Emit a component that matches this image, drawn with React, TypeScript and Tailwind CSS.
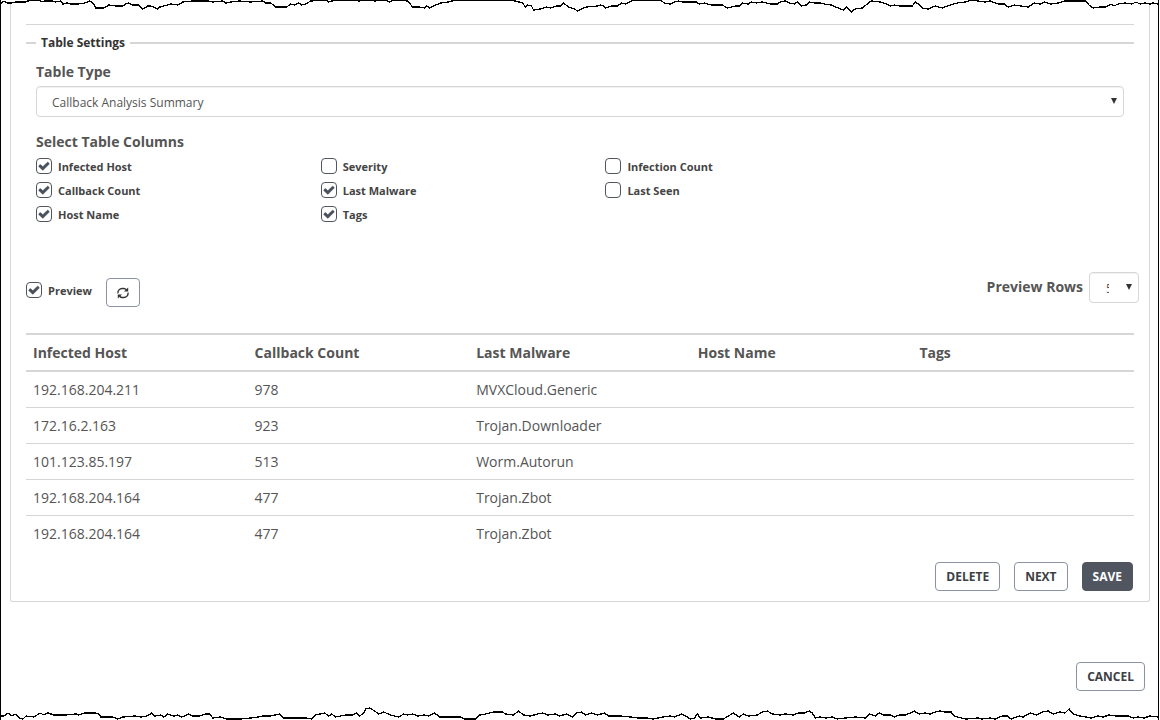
import { useState } from "react";

const COLUMNS = [
  { name: "Infected Host", checked: true },
  { name: "Severity", checked: false },
  { name: "Infection Count", checked: false },
  { name: "Callback Count", checked: true },
  { name: "Last Malware", checked: true },
  { name: "Last Seen", checked: false },
  { name: "Host Name", checked: true },
  { name: "Tags", checked: true },
];

const HEADERS = ["Infected Host", "Callback Count", "Last Malware", "Host Name", "Tags"];

const ROWS = [
  ["192.168.204.211", "978", "MVXCloud.Generic", "", ""],
  ["172.16.2.163", "923", "Trojan.Downloader", "", ""],
  ["101.123.85.197", "513", "Worm.Autorun", "", ""],
  ["192.168.204.164", "477", "Trojan.Zbot", "", ""],
  ["192.168.204.164", "477", "Trojan.Zbot", "", ""],
];

const TOP_EDGE =
  "0,4 2,1 4,2 7,3 10,3 15,2 25,2 27,1 34,0 40,1 42,2 44,1 52,1 54,2 60,1 62,4 66,3 70,4 77,4 84,3 89,1 92,3 95,8 103,8 108,5 115,6 122,6 125,4 128,3 132,5 138,5 142,9 147,6 150,6 155,8 157,9 159,7 163,6 170,4 177,5 182,2 192,1 207,1 212,2 222,1 225,3 230,2 238,1 250,2 262,1 265,3 270,3 275,7 282,7 286,7 290,4 294,5 298,3 301,5 305,4 310,1 325,0 328,2 331,1 337,0 355,0 358,1 365,0 375,1 380,0 387,1 389,2 393,0 407,1 412,7 419,7 424,8 426,6 429,8 435,5 440,3 448,2 455,0 505,0 515,1 522,3 525,7 527,5 531,6 533,10 540,9 546,7 550,8 556,6 560,6 563,3 568,7 574,9 577,11 581,9 586,7 597,6 600,5 603,6 605,8 611,6 617,6 621,3 625,4 629,2 634,0 660,0 664,3 670,4 674,2 678,1 682,2 696,2 699,4 704,3 711,5 722,5 727,8 735,6 739,6 742,3 748,4 751,2 756,3 762,2 770,4 777,4 780,2 785,1 789,3 794,4 797,2 801,6 806,5 809,2 814,3 820,3 824,4 831,5 838,8 843,10 846,7 851,12 855,9 862,8 867,4 871,1 880,2 886,4 890,6 894,5 900,6 912,6 915,2 918,4 922,8 928,9 935,6 942,8 950,5 957,3 965,2 972,0 978,1 985,2 990,1 998,4 1004,4 1008,7 1014,5 1021,6 1028,7 1034,3 1040,4 1044,2 1051,4 1058,3 1065,1 1072,1 1086,1 1089,5 1093,8 1100,7 1106,7 1111,4 1114,6 1118,4 1125,3 1132,4 1136,2 1140,4 1145,3 1150,4 1153,3 1158,4";

const BOTTOM_EDGE =
  "0,16 3,16 7,13 11,16 15,14 18,18 22,19 25,16 33,17 39,13 43,15 47,13 53,15 65,15 75,14 78,15 84,13 94,13 98,14 100,17 112,17 117,19 122,17 134,16 140,17 146,16 151,13 154,16 160,15 163,17 167,14 173,16 177,15 181,17 188,14 192,16 199,16 205,14 209,14 212,18 220,17 226,19 233,19 240,19 250,18 257,17 262,16 270,16 279,14 283,18 305,18 311,19 315,15 324,13 328,16 331,14 335,17 345,15 352,15 356,13 359,16 363,13 365,9 369,8 374,11 378,14 383,12 390,15 398,17 403,14 407,15 412,14 417,16 424,15 428,16 434,13 439,17 446,17 460,17 464,19 475,19 479,15 485,14 493,12 502,12 505,14 513,15 518,11 523,15 530,16 537,14 542,13 547,15 555,14 559,16 566,14 572,17 576,13 581,12 585,15 591,13 597,15 604,13 608,16 620,16 630,17 638,18 646,18 653,19 662,17 670,16 674,17 681,14 685,16 690,19 694,18 697,14 700,18 708,17 715,19 723,19 728,16 733,13 739,17 743,14 748,16 757,15 762,12 767,11 772,14 780,15 785,14 793,15 798,13 804,13 809,11 812,13 815,18 820,17 826,18 832,17 837,19 845,18 855,17 865,18 869,14 875,16 879,13 883,15 890,15 894,17 899,15 905,15 910,13 914,11 919,14 925,13 930,14 935,12 940,11 945,12 951,12 954,16 961,18 966,19 978,18 982,19 990,18 995,19 1002,16 1007,16 1011,19 1019,16 1023,17 1030,13 1036,15 1042,12 1048,11 1053,14 1060,12 1065,13 1069,9 1073,14 1080,16 1086,17 1091,18 1098,16 1103,17 1109,15 1116,16 1128,16 1133,18 1138,17 1144,18 1150,16 1158,17";

// Ragged line along the page edge; everything outside it is painted white.
function TornEdge({ side }: { side: "top" | "bottom" }) {
  const top = side === "top";
  const line = top ? TOP_EDGE : BOTTOM_EDGE;
  const outside = top ? "1162,4 1162,-3 -3,-3 -3,4" : "1162,17 1162,24 -3,24 -3,16";
  return (
    <svg
      aria-hidden="true"
      viewBox="0 0 1158 20"
      preserveAspectRatio="none"
      shapeRendering="crispEdges"
      className={`pointer-events-none absolute inset-x-0 h-5 w-full ${top ? "top-0" : "bottom-0"}`}
    >
      <polygon points={`${line} ${outside}`} fill="#fff" />
      <polyline points={line} fill="none" stroke="#000" strokeWidth="1.3" vectorEffect="non-scaling-stroke" />
    </svg>
  );
}

function Checkbox({ label, defaultChecked }: { label: string; defaultChecked: boolean }) {
  return (
    <label className="flex h-6 items-center text-[11px] font-bold text-[#444]">
      <span className="relative mr-1.5 flex size-4">
        <input
          type="checkbox"
          defaultChecked={defaultChecked}
          className="peer size-4 appearance-none rounded-[4px] border border-[#50555f] bg-white"
        />
        <svg
          viewBox="0 0 1792 1792"
          aria-hidden="true"
          className="pointer-events-none absolute top-0.5 left-0.5 hidden size-3 fill-[#4a505b] stroke-[#4a505b] peer-checked:block"
          strokeWidth="90"
        >
          <path d="M1671 566q0 40-28 68l-724 724-136 136q-28 28-68 28t-68-28l-136-136-362-362q-28-28-28-68t28-68l136-136q28-28 68-28t68 28l294 295 656-657q28-28 68-28t68 28l136 136q28 28 28 68z" />
        </svg>
      </span>
      <span className="pt-0.5">{label}</span>
    </label>
  );
}

function Arrow() {
  return (
    <svg
      viewBox="0 0 6 6"
      aria-hidden="true"
      className="pointer-events-none absolute top-3 right-[7px] size-1.5 fill-[#333]"
    >
      <path d="M0 0h6L3 6z" />
    </svg>
  );
}

const selectClass =
  "block h-[31px] appearance-none rounded-[4px] border border-[#d6d6d6] bg-white pt-0.5 text-xs inset-shadow-2xs";

const buttonClass =
  "h-[29px] rounded-[4px] border border-[#8b93a3] bg-white px-2.5 text-xs font-bold text-[#3c3f45]";

export default function App() {
  const [tableType, setTableType] = useState("Callback Analysis Summary");

  return (
    <div className="relative mr-px min-h-screen border-x border-black bg-white font-['Open_Sans',sans-serif] text-sm text-[#555]">
      <main className="mr-2 ml-[9px] rounded-b-[3px] border border-t-0 border-[#d6d6d6] pt-6 pb-2.5">
        <hr className="mx-[15px] border-[#d6d6d6]" />
        <fieldset className="mx-[15px] mt-2.5 border-t-2 border-[#d6d6d6] px-2.5">
          <legend className="px-[5px] text-xs leading-4 font-bold text-[#333]">Table Settings</legend>
          <label htmlFor="table-type" className="mt-[11px] block leading-5 font-bold">
            Table Type
          </label>
          <div className="relative mt-1">
            <select
              id="table-type"
              value={tableType}
              onChange={(e) => setTableType(e.target.value)}
              className={`${selectClass} w-full px-[15px]`}
            >
              <option>Callback Analysis Summary</option>
            </select>
            <Arrow />
          </div>
          <h2 className="mt-[15px] leading-5 font-bold">Select Table Columns</h2>
          <div className="mt-0.5 grid w-[78.5%] grid-cols-3">
            {COLUMNS.map((c) => (
              <Checkbox key={c.name} label={c.name} defaultChecked={c.checked} />
            ))}
          </div>
        </fieldset>

        <div className="mt-[46px] flex items-start justify-between pr-2.5 pl-[15px]">
          <div className="flex items-start gap-3.5 pt-1.5">
            <Checkbox label="Preview" defaultChecked />
            <button
              type="button"
              aria-label="Refresh preview"
              className="flex h-[29px] w-[34px] items-center justify-center rounded-[4px] border border-[#8b93a3] bg-white"
            >
              <svg viewBox="0 0 12 12" className="size-3 fill-none stroke-[#333]" strokeWidth="1.4">
                <path d="M.9 6.4C.7 3.6 2.6 1.5 5.2 1.5h1.6c1 0 1.8.5 2.6 1.3M11.1 5.6c.2 2.8-1.7 4.9-4.3 4.9H5.2c-1 0-1.8-.5-2.6-1.3" />
                <path d="M11.2.4v4.2H7zM.8 11.6V7.4H5z" className="fill-[#333] stroke-none" />
              </svg>
            </button>
          </div>
          <div className="flex items-start gap-1.5">
            <label htmlFor="preview-rows" className="leading-[29px] font-bold">
              Preview Rows
            </label>
            <div className="relative">
              <select id="preview-rows" className={`${selectClass} w-[50px] pr-[29px] pl-4`}>
                <option>5</option>
                <option>10</option>
              </select>
              <Arrow />
            </div>
          </div>
        </div>

        <div className="mt-[26px] px-[15px]">
          <table className="w-full table-fixed border-separate border-spacing-0 text-left">
            <thead>
              <tr>
                {HEADERS.map((h) => (
                  <th key={h} className="h-[39px] border-y-2 border-[#d6d6d6] px-[7px] py-0 font-bold">
                    {h}
                  </th>
                ))}
              </tr>
            </thead>
            <tbody>
              {ROWS.map((row, i) => (
                <tr key={i} className="group">
                  {row.map((cell, j) => (
                    <td key={j} className="h-9 border-b border-[#d6d6d6] px-[7px] py-0 group-last:border-transparent">
                      {cell}
                    </td>
                  ))}
                </tr>
              ))}
            </tbody>
          </table>
        </div>

        <div className="mt-2.5 flex justify-end gap-3.5 pr-4">
          <button type="button" className={buttonClass}>
            DELETE
          </button>
          <button type="button" className={buttonClass}>
            NEXT
          </button>
          <button
            type="button"
            className="h-[29px] rounded-[4px] border border-[#50555f] bg-[#50555f] px-2.5 text-xs font-bold text-white"
          >
            SAVE
          </button>
        </div>
      </main>

      <div className="mt-[60px] flex justify-end pr-[13px] pb-7">
        <button type="button" className={buttonClass}>
          CANCEL
        </button>
      </div>

      <TornEdge side="top" />
      <TornEdge side="bottom" />
    </div>
  );
}
